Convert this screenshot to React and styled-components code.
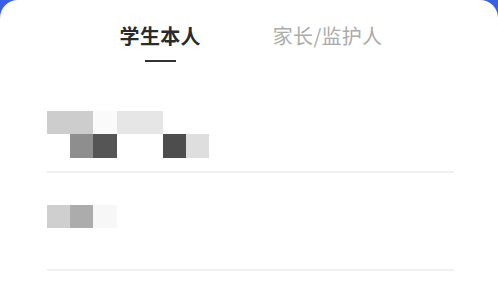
import React from "react";
import styled, { createGlobalStyle } from "styled-components";

const Global = createGlobalStyle`
  html, body { margin: 0; padding: 0; background: #3a5ee6; }
  body { width: 498px; height: 305px; overflow: hidden; font-family: "Noto Sans CJK SC", "Noto Sans", sans-serif; }
`;

const Card = styled.div`
  width: 498px;
  height: 305px;
  overflow: hidden;
  background: #ffffff;
  border-radius: 18px 18px 0 0;
  box-sizing: border-box;
  display: flex;
  flex-direction: column;
`;

const Tabs = styled.div`
  display: flex;
  justify-content: center;
  gap: 72px;
  padding-top: 22px;
  padding-left: 4px;
`;

const Tab = styled.div`
  display: flex;
  flex-direction: column;
  align-items: center;
  font-size: 20px;
  line-height: 28px;
  font-weight: ${(p) => (p.$active ? 700 : 400)};
  color: ${(p) => (p.$active ? "#2b2b2b" : "#ababab")};
  letter-spacing: 0.3px;
`;

const Underline = styled.div`
  width: 31px;
  height: 2px;
  margin-top: 10px;
  background: ${(p) => (p.$show ? "#333" : "transparent")};
`;

const Section = styled.div`
  flex-shrink: 0;
  margin: 0 44px 0 47px;
  border-bottom: 2px solid #f0f0f0;
  display: flex;
  flex-direction: column;
  padding-top: ${(p) => p.$top}px;
  height: ${(p) => p.$h}px;
  box-sizing: border-box;
`;

const MosaicRow = styled.div`
  display: flex;
  height: ${(p) => p.$h}px;
`;

const Cell = styled.div`
  width: ${(p) => p.$w}px;
  height: 100%;
  background: ${(p) => p.$c};
`;

const rows1 = [
  { h: 23, cells: [[46, "#cdcdcd"], [24, "#fafafa"], [46, "#e6e6e6"]] },
  { h: 24, cells: [[23, "#ffffff"], [23, "#8e8e8e"], [24, "#555555"], [46, "#ffffff"], [23, "#4d4d4d"], [23, "#dedede"]] },
];

const rows2 = [
  { h: 23, cells: [[23, "#cfcfcf"], [23, "#acacac"], [24, "#f7f7f7"]] },
];

function Mosaic({ rows }) {
  return rows.map((r, i) => (
    <MosaicRow key={i} $h={r.h}>
      {r.cells.map(([w, c], j) => (
        <Cell key={j} $w={w} $c={c} />
      ))}
    </MosaicRow>
  ));
}

export default function App() {
  return (
    <>
      <Global />
      <Card>
        <Tabs>
          <Tab $active>
            学生本人
            <Underline $show />
          </Tab>
          <Tab>
            家长/监护人
            <Underline />
          </Tab>
        </Tabs>
        <Section $top={49} $h={111}>
          <Mosaic rows={rows1} />
        </Section>
        <Section $top={32} $h={98}>
          <Mosaic rows={rows2} />
        </Section>
      </Card>
    </>
  );
}
